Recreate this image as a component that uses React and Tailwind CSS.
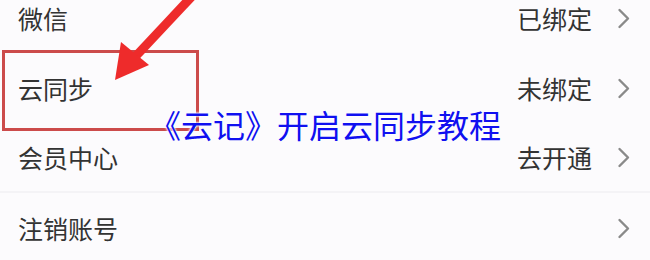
import React from "react";

const rows = [
  { label: "微信", value: "已绑定" },
  { label: "云同步", value: "未绑定" },
  { label: "会员中心", value: "去开通", divider: true },
  { label: "注销账号", value: "" },
];

function Chevron() {
  return (
    <svg width="14" height="21" viewBox="0 0 14 21" className="shrink-0">
      <polyline points="2.5,2 11,10.5 2.5,19" fill="none" stroke="#8a8a8a" strokeWidth="2.4" strokeLinecap="round" strokeLinejoin="round" />
    </svg>
  );
}

export default function App() {
  return (
    <div
      className="relative w-[650px] h-[260px] overflow-hidden bg-[#fcfbfd]"
      style={{ fontFamily: '"Noto Sans CJK SC", "Noto Sans", sans-serif' }}
    >
      <div className="flex flex-col mt-[-17px]">
        {rows.map((r) => (
          <div
            key={r.label}
            className={`flex items-center h-[70px] pl-[18px] pr-[19px] ${r.divider ? "border-b-2 border-[#f4f3f6]" : ""}`}
          >
            <span className="text-[25px] leading-none text-[#333333]">{r.label}</span>
            <span className="ml-auto text-[25px] leading-none text-[#333333]">{r.value}</span>
            <span className="ml-[25px]">
              <Chevron />
            </span>
          </div>
        ))}
      </div>

      {/* annotation box */}
      <div className="absolute left-[2px] top-[50px] w-[197px] h-[81px] border-[3px] border-[#cc4b4b]" />

      {/* arrow */}
      <svg className="absolute left-0 top-0" width="650" height="260" viewBox="0 0 650 260">
        <line x1="196" y1="-8" x2="136" y2="56" stroke="#ee2b2b" strokeWidth="9" />
        <polygon points="115,80 121,42 149,65" fill="#ee2b2b" />
      </svg>

      {/* title overlay */}
      <div className="absolute left-0 right-0 top-[108px] flex justify-center">
        <span className="text-[32px] leading-none text-[#1010f0] [text-shadow:0_0_2px_#fff,0_0_2px_#fff,0_0_3px_#fff]">
          《云记》开启云同步教程
        </span>
      </div>
    </div>
  );
}
